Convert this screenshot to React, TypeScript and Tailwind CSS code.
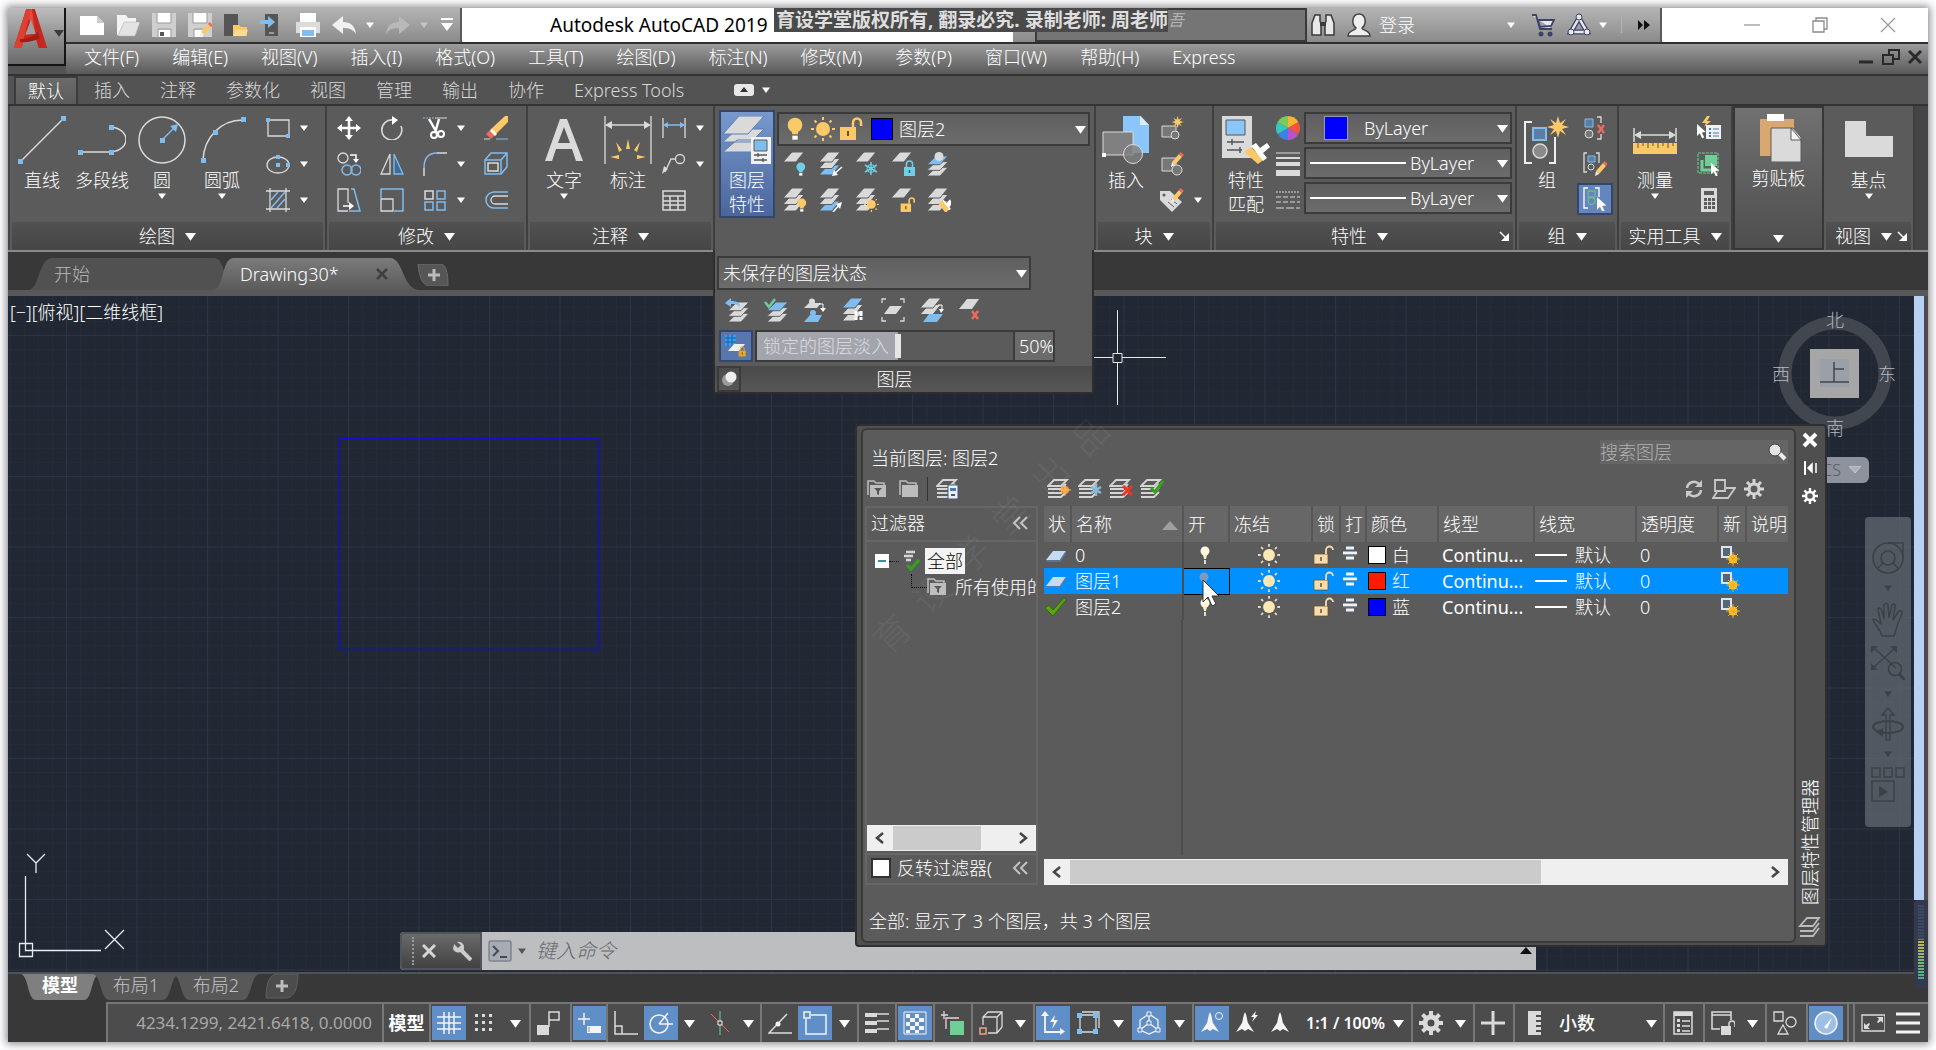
import React from "react";

const G = "#dadada";
const B = "#7fbcf0";
const Y = "#fcc969";
const R = "#ef6a5c";
const N = "#6fcf97";
const C = "#6fcfe6";
const BG = "#5b5b5b";

type Kids = { children?: React.ReactNode };

function Ic({ w = 24, h = 24, vb, children }: { w?: number; h?: number; vb?: string } & Kids) {
  return (
    <svg width={w} height={h} viewBox={vb ?? `0 0 ${w} ${h}`} fill="none" className="block shrink-0" aria-hidden="true">
      {children}
    </svg>
  );
}

function Caret({ size = 8, color = "#fff" }: { size?: number; color?: string }) {
  return (
    <Ic w={size} h={size} vb="0 0 8 8">
      <path d="M0 1.5h8L4 7z" fill={color} />
    </Ic>
  );
}

/* A stack of drawing sheets, listed from top to bottom */
function Stack({ colors = [G, G, G] }: { colors?: string[] }) {
  return (
    <g>
      {colors
        .map((c, i) => (
          <path key={i} d="M9 0h12l-8 10H0z" transform={`translate(0 ${i * 6.5})`} fill={c} stroke={BG} strokeWidth="1" />
        ))
        .reverse()}
    </g>
  );
}

const Bulb = ({ c = Y }: { c?: string }) => (
  <g>
    <circle cx="6" cy="6" r="5.5" fill={c} />
    <path d="M3 9h6l-1 4H4z" fill={c} />
    <path d="M4 14h4v3H4z" fill="#fff" />
  </g>
);
const Sun = ({ c = Y }: { c?: string }) => (
  <g>
    <circle cx="12" cy="12" r="7" fill={c} />
    <path d="M12 0v3M12 21v3M0 12h3M21 12h3M3.500 3.500l2 2M18.500 18.500l2 2M3.500 20.500l2-2M18.500 5.500l2-2" stroke={c} strokeWidth="2" />
  </g>
);
const Unlock = ({ c = Y }: { c?: string }) => (
  <g>
    <rect x="1" y="10" width="16" height="13" fill={c} />
    <path d="M14 10V5.500a4 4 0 0 1 8 0V9" stroke={c} strokeWidth="2.500" />
    <path d="M9 14v5" stroke="#6b5324" strokeWidth="2" />
  </g>
);
const Lock = ({ c = C }: { c?: string }) => (
  <g>
    <rect x="1" y="7" width="11" height="9" fill={c} />
    <path d="M3.500 7V4a3 3 0 0 1 6 0v3" stroke={c} strokeWidth="1.500" />
    <path d="M6.500 10v3" stroke="#2d5963" strokeWidth="1.500" />
  </g>
);
const Pencil = () => (
  <g>
    <path d="M2 10L9 2l3 3-7 8z" fill={Y} />
    <path d="M9 2l1.500-2L14 3l-2 2z" fill={R} />
    <path d="M2 10l3 3-4 2z" fill="#eee" />
  </g>
);
const Burst = () => (
  <path d="M12 0l2 7 6-4-4 6 7 2-7 2 4 6-6-4-2 7-2-7-6 4 4-6-7-2 7-2-4-6 6 4z" fill={Y} />
);
const Cross = ({ c = R }: { c?: string }) => <path d="M1 1l6 8M7 1L1 9" stroke={c} strokeWidth="2.500" />;
const Pointer = () => <path d="M0 0l11 10-5 .5 3 6-2.500 1.500-3-6.500L0 15z" fill="#fff" />;
const Brush = () => (
  <g>
    <path d="M5 3l4 5 4-4 1 2-3 4 2 3" stroke="#fff" strokeWidth="3" />
    <path d="M0 6l5-3 7 9-3 5z" fill={Y} />
  </g>
);

const I = {
  line: (
    <Ic w={48} h={48}>
      <path d="M3 45L45 3" stroke={G} strokeWidth="1.500" />
      <path d="M0 43h5v5H0zM43 0h5v5h-5z" fill={B} />
    </Ic>
  ),
  pline: (
    <Ic w={48} h={48}>
      <path d="M3 36h30c20-2 20-23 0-25" stroke={G} strokeWidth="1.500" />
      <path d="M0 34h5v5H0zM31 34h5v5h-5zM31 9h5v5h-5z" fill={B} />
    </Ic>
  ),
  circle: (
    <Ic w={48} h={48}>
      <circle cx="24" cy="24" r="23" stroke={G} strokeWidth="1.500" />
      <path d="M24 24l13-13" stroke={B} strokeWidth="1.500" />
      <path d="M40 8l-2 8-6-6zM22 22h5v5h-5z" fill={B} />
    </Ic>
  ),
  arc: (
    <Ic w={48} h={48}>
      <path d="M5 44C6 22 22 4 45 4" stroke={G} strokeWidth="1.500" />
      <path d="M3 42h5v5H3zM43 1h5v5h-5zM15 14h5v5h-5z" fill={B} />
    </Ic>
  ),
  rect: (
    <Ic>
      <path d="M2 4h21v16H2z" stroke={G} strokeWidth="1.300" />
      <path d="M0 2h4v4H0zM20 18h4v4h-4z" fill={B} />
    </Ic>
  ),
  ellipse: (
    <Ic>
      <ellipse cx="12" cy="13" rx="11" ry="8" stroke={G} strokeWidth="1.300" />
      <path d="M10 3h4v4h-4zM10 11h4v4h-4zM20 11h4v4h-4z" fill={B} />
    </Ic>
  ),
  hatch: (
    <Ic>
      <path d="M4 0v24M20 0v24M0 3h24M0 21h24" stroke={G} strokeWidth="1.300" />
      <path d="M5 12l7-8M5 20L19 4M11 20l8-9" stroke={B} strokeWidth="1.500" />
    </Ic>
  ),
  move: (
    <Ic>
      <path d="M12 3v18M3 12h18" stroke="#fff" strokeWidth="2.500" />
      <path d="M12 0l4 5H8zM12 24l4-5H8zM0 12l5-4v8zM24 12l-5-4v8z" fill="#fff" />
    </Ic>
  ),
  rotate: (
    <Ic>
      <path d="M13 4a10 10 0 1 0 8 6" stroke={G} strokeWidth="1.600" />
      <path d="M12 0l6 4-6 5z" fill="#fff" />
    </Ic>
  ),
  trim: (
    <Ic>
      <path d="M0 2h12" stroke={B} strokeDasharray="2 1" />
      <path d="M12 2h12" stroke={G} />
      <path d="M6 3l8 14M16 3l-4 14" stroke="#fff" strokeWidth="2.500" />
      <circle cx="11" cy="19" r="3" stroke="#fff" strokeWidth="2" />
      <circle cx="18" cy="18" r="3" stroke="#fff" strokeWidth="2" />
    </Ic>
  ),
  erase: (
    <Ic>
      <path d="M6 14L21 0h3v6L11 19z" fill={Y} />
      <path d="M6 14l5 5-4 4-5-5z" fill={R} />
      <path d="M8 13l5 5-2 2-5-5z" fill="#fff" />
      <path d="M0 23h6" stroke={G} />
      <path d="M12 23h12" stroke={B} />
    </Ic>
  ),
  copy: (
    <Ic>
      <circle cx="6" cy="6" r="5" stroke={G} strokeWidth="1.300" />
      <path d="M13 3h6v6" stroke="#fff" strokeWidth="1.500" />
      <path d="M16 7h6l-3 4z" fill="#fff" />
      <circle cx="10" cy="18" r="5" stroke={B} strokeWidth="1.500" />
      <circle cx="19" cy="18" r="5" stroke={B} strokeWidth="1.500" />
    </Ic>
  ),
  mirror: (
    <Ic>
      <path d="M10 2v20H1z" stroke={G} strokeWidth="1.300" />
      <path d="M14 2v20h9z" fill="#3f6c94" stroke={B} strokeWidth="1.300" />
    </Ic>
  ),
  fillet: (
    <Ic>
      <path d="M1 24v-8M14 1h10" stroke={G} strokeWidth="1.500" />
      <path d="M1 16C1 6 6 1 14 1" stroke={B} strokeWidth="1.500" />
    </Ic>
  ),
  explode: (
    <Ic>
      <path d="M1 8l6-7h16v14l-6 7M17 8l6-7" stroke={B} strokeWidth="1.500" />
      <path d="M1 8h16v14H1z" stroke={B} strokeWidth="1.500" />
      <path d="M4 11h10v8H4z" stroke={G} strokeWidth="1.500" />
    </Ic>
  ),
  stretch: (
    <Ic>
      <path d="M11 15V1H1v22h10" stroke={G} strokeWidth="1.300" />
      <path d="M14 1h3l6 22H12" stroke={B} strokeWidth="1.500" />
      <path d="M6 18h6" stroke="#fff" strokeWidth="1.500" />
      <path d="M12 14l5 4-5 4z" fill="#fff" />
    </Ic>
  ),
  scale: (
    <Ic>
      <path d="M1 10V1h22v22H14" stroke={B} strokeWidth="1.500" />
      <path d="M1 11h12v12H1z" stroke={G} strokeWidth="1.300" />
    </Ic>
  ),
  array: (
    <Ic>
      <path d="M2 3h8v8H2z" stroke={G} strokeWidth="1.500" />
      <path d="M14 3h8v8h-8zM2 14h8v8H2zM14 14h8v8h-8z" stroke={B} strokeWidth="1.500" />
    </Ic>
  ),
  offset: (
    <Ic>
      <path d="M24 4H10a8 8 0 0 0 0 16h14" stroke={B} strokeWidth="1.500" />
      <path d="M24 8H11a4 4 0 0 0 0 8h13" stroke={G} strokeWidth="1.300" />
    </Ic>
  ),
  text: (
    <Ic w={48} h={48}>
      <path d="M5 45L20 3h7l16 42h-7l-4-12H16l-4 12zM18 27h12L24 11z" fill={G} fillRule="evenodd" />
    </Ic>
  ),
  dim: (
    <Ic w={48} h={48}>
      <path d="M1 0v48M47 0v48M3 9h42" stroke={G} strokeWidth="1.300" />
      <path d="M1 9l7-4v8zM47 9l-7-4v8z" fill={G} />
      <path d="M24 23l-2 10h4zM12 26l3 10 3-2zM36 26l-3 10-3-2zM6 41l9-2v4zM42 41l-9-2v4z" fill={Y} />
    </Ic>
  ),
  dimSm: (
    <Ic>
      <path d="M1 2v20M23 2v20" stroke={G} strokeWidth="1.300" />
      <path d="M2 9h20" stroke={B} strokeWidth="1.500" />
      <path d="M1 9l5-3v6zM23 9l-5-3v6z" fill={B} />
    </Ic>
  ),
  leader: (
    <Ic>
      <circle cx="18" cy="7" r="4.500" stroke={G} strokeWidth="1.300" />
      <path d="M13 7H9L3 20" stroke={G} strokeWidth="1.300" />
      <path d="M0 22l2-8 4 3z" fill={G} />
    </Ic>
  ),
  table: (
    <Ic>
      <path d="M1 3h22v19H1zM1 8h22M1 13h22M1 17h22M8 8v14M16 8v14" stroke={G} strokeWidth="1.500" />
    </Ic>
  ),
  layerProps: (
    <Ic w={48} h={48}>
      <path d="M14 24h27L28 36H0zM14 13h27L28 26H0z" fill={G} stroke="#5d82b5" />
      <path d="M16 0h25L25 18H0z" fill={G} stroke="#5d82b5" />
      <path d="M28 21h20v27H28z" fill="#f2f2f2" />
      <path d="M31 24h13v11H31z" fill={B} stroke="#5a5a5a" />
      <path d="M31 39h13M31 44h13M35 37v4M40 42v4" stroke="#555" strokeWidth="1.300" />
    </Ic>
  ),
  insert: (
    <Ic w={48} h={48}>
      <path d="M21 0h18l8 9v28H21z" fill="#8bc6fb" />
      <path d="M38 0l9 9h-9z" fill="#d8ecfd" />
      <path d="M1 16h30v23H1z" fill="#808080" stroke={G} />
      <circle cx="31" cy="38" r="9.500" fill="#808080" fillOpacity=".8" stroke={G} />
      <path d="M0 37h4v4H0z" fill="#fff" />
    </Ic>
  ),
  matchProps: (
    <Ic w={48} h={48}>
      <path d="M0 0h30v42H0z" fill={G} />
      <path d="M4 4h19v15H4z" fill="#8bc6fb" stroke="#555" />
      <path d="M5 26h17M5 34h15M10 23v6M18 31v6" stroke="#555" strokeWidth="1.500" />
      <path d="M22 36l7-5 12 13-5 4z" fill={Y} />
      <path d="M29 30l5-3 4 5 7-5 3 4-7 6 4 5-4 3z" fill="#fff" />
    </Ic>
  ),
  wheel: (
    <Ic>
      <path d="M12 12V0a12 12 0 0 1 10.400 6z" fill="#f9b234" />
      <path d="M12 12l10.400-6a12 12 0 0 1 0 12z" fill="#f0563d" />
      <path d="M12 12l10.400 6A12 12 0 0 1 12 24z" fill="#b854c9" />
      <path d="M12 12v12a12 12 0 0 1-10.400-6z" fill="#3f7fe0" />
      <path d="M12 12L1.600 18a12 12 0 0 1 0-12z" fill="#37c6c0" />
      <path d="M12 12L1.600 6A12 12 0 0 1 12 0z" fill="#7cc95c" />
    </Ic>
  ),
  weights: (
    <Ic>
      <path d="M0 1h24" stroke={G} strokeWidth="1" />
      <path d="M0 6h24" stroke={G} strokeWidth="2" />
      <path d="M0 12h24" stroke={G} strokeWidth="4" />
      <path d="M0 21h24" stroke={G} strokeWidth="6" />
    </Ic>
  ),
  types: (
    <Ic>
      <path d="M0 4h24" stroke={G} strokeDasharray="2 1" />
      <path d="M0 9h24M0 14h24" stroke={G} strokeDasharray="5 2" />
      <path d="M0 20h24" stroke={G} strokeDasharray="8 2" />
    </Ic>
  ),
  blockNew: (
    <Ic>
      <path d="M2 10h14v11H2z" stroke={G} fill="#777" />
      <circle cx="15" cy="19" r="4" stroke={G} fill="#777" />
      <g transform="translate(11 0) scale(.55)"><Burst /></g>
    </Ic>
  ),
  blockEdit: (
    <Ic>
      <path d="M2 6h14v13H2z" stroke={G} fill="#777" />
      <circle cx="17" cy="18" r="5" stroke={G} fill="#777" />
      <g transform="translate(10 0)"><Pencil /></g>
    </Ic>
  ),
  blockTag: (
    <Ic>
      <path d="M0 3h10l12 11-10 10L0 12z" fill={G} />
      <circle cx="4" cy="7" r="1.500" fill={BG} />
      <path d="M8 14l6 5M11 11l6 5" stroke="#666" />
      <g transform="translate(10 0)"><Pencil /></g>
    </Ic>
  ),
  group: (
    <Ic w={48} h={48}>
      <path d="M9 6H2v41h7M26 47h6V21" stroke="#eee" strokeWidth="2" />
      <path d="M10 12h13v12H10z" fill="#5a7fa3" stroke={B} strokeWidth="2" />
      <circle cx="17" cy="35" r="7" fill="#8a8a8a" stroke={G} strokeWidth="1.500" />
      <g transform="translate(23 0)"><Burst /></g>
    </Ic>
  ),
  ungroup: (
    <Ic>
      <path d="M2 3h8v8H2z" fill="#5a7fa3" stroke={B} />
      <circle cx="6" cy="18" r="4" fill="#777" stroke={G} />
      <path d="M14 1h4v6M18 18v5h-4" stroke={G} strokeWidth="1.300" />
      <g transform="translate(14 8)"><Cross /></g>
    </Ic>
  ),
  groupEdit: (
    <Ic>
      <path d="M4 1H1v19h3M13 1h3v10" stroke={G} strokeWidth="1.300" />
      <path d="M5 4h7v6H5z" fill="#5a7fa3" stroke={B} />
      <circle cx="8" cy="15" r="3" stroke={G} />
      <g transform="translate(11 9)"><Pencil /></g>
    </Ic>
  ),
  groupSel: (
    <Ic>
      <path d="M5 1H1v20h4M12 1h4v9" stroke="#fff" strokeWidth="1.300" />
      <path d="M5 4h7v6H5zM5 14a3.500 3.500 0 1 0 7 0a3.500 3.500 0 1 0-7 0" stroke="#6dbb8f" strokeWidth="1.300" />
      <g transform="translate(14 10) scale(.85)"><Pointer /></g>
    </Ic>
  ),
  measure: (
    <Ic w={48} h={48}>
      <path d="M3 12v14M45 12v14M5 19h38" stroke={G} strokeWidth="1.500" />
      <path d="M3 19l7-4v8zM45 19l-7-4v8z" fill={G} />
      <path d="M2 27h44v11H2z" fill={Y} />
      <path d="M7 27v5M12 27v3M17 27v5M22 27v3M27 27v5M32 27v3M37 27v5M42 27v3" stroke="#6b5324" />
    </Ic>
  ),
  qselect: (
    <Ic>
      <path d="M9 9h15v14H9z" fill="#f2f2f2" />
      <path d="M12 12h2v2h-2zM12 16h2v2h-2zM12 19h2v2h-2z" fill="#3a7bc8" />
      <path d="M16 13h6M16 17h6M16 20h6" stroke="#3a7bc8" />
      <path d="M10 0l-5 7h4l-2 4 7-6h-4l3-5z" fill={Y} />
      <g transform="translate(0 8) scale(.8)"><Pointer /></g>
    </Ic>
  ),
  selAll: (
    <Ic>
      <path d="M1 1h20v20H1z" stroke={N} strokeDasharray="3 1" />
      <path d="M8 3h12v11H8z" fill={N} />
      <path d="M5 8v10h11" stroke={N} strokeWidth="3" />
      <g transform="translate(14 11) scale(.75)"><Pointer /></g>
    </Ic>
  ),
  calc: (
    <Ic>
      <path d="M4 0h16v24H4z" fill={G} />
      <path d="M7 3h10v4H7z" fill={BG} />
      <path d="M7 10h3v3H7zM11 10h3v3h-3zM15 10h3v3h-3zM7 14h3v3H7zM11 14h3v3h-3zM15 14h3v3h-3zM7 18h3v3H7zM11 18h3v3h-3zM15 18h3v3h-3z" fill={BG} />
    </Ic>
  ),
  paste: (
    <Ic w={48} h={48}>
      <path d="M5 5h34v37H5z" fill="#d9a870" />
      <path d="M12 0h17v7H12z" fill="#fff" />
      <path d="M16 14h22l8 9v25H16z" fill={G} stroke="#5b5b5b" />
      <path d="M36 14l10 12H36z" fill="#f5f5f5" stroke="#5b5b5b" />
    </Ic>
  ),
  base: (
    <Ic w={48} h={48}>
      <path d="M0 5h21v15h27v21H0z" fill={G} />
    </Ic>
  ),
};

const layerIcons: React.ReactNode[][] = [
  [
    <Ic key="a"><Stack colors={[G]} /><g transform="translate(13 10) scale(.8)"><Bulb c={C} /></g></Ic>,
    <Ic key="b"><Stack colors={[G, G, B]} /><path d="M23 15l-8 7" stroke="#fff" strokeWidth="1.500" /><path d="M13 24l2-6 4 5z" fill="#fff" /></Ic>,
    <Ic key="c"><Stack colors={[G]} /><path d="M16 10v13M10 13l12 7M22 13l-12 7" stroke={C} strokeWidth="1.500" /><circle cx="16" cy="16.500" r="4" stroke={C} /></Ic>,
    <Ic key="d"><Stack colors={[G]} /><g transform="translate(12 8)"><Lock /></g></Ic>,
    <Ic key="e"><g transform="translate(0 4) scale(1 .87)"><Stack colors={[B, G, G]} /></g><circle cx="12" cy="4.500" r="4.500" fill={G} /></Ic>,
  ],
  [
    <Ic key="a"><Stack /><g transform="translate(14 10) scale(.8)"><Bulb /></g></Ic>,
    <Ic key="b"><Stack colors={[G, G, B]} /><path d="M14 24l7-8" stroke="#fff" strokeWidth="1.500" /><path d="M23 14l-2 7-4-5z" fill="#fff" /></Ic>,
    <Ic key="c"><Stack /><g transform="translate(9 9) scale(.62)"><Sun /></g></Ic>,
    <Ic key="d"><Stack colors={[G]} /><g transform="translate(9 9) scale(.65)"><Unlock /></g></Ic>,
    <Ic key="e"><Stack /><g transform="translate(11 10) scale(.9)"><Brush /></g></Ic>,
  ],
];

const stateIcons: React.ReactNode[] = [
  <Ic key="a"><g transform="translate(3 4) scale(1 .87)"><Stack /></g><path d="M0 5l6-5v3c6 0 9 2 9 6-3-3-5-3-9-3v3z" fill={B} /></Ic>,
  <Ic key="b"><g transform="translate(3 4) scale(1 .87)"><Stack colors={[B, G, G]} /></g><path d="M1 4l4 5 6-8" stroke={N} strokeWidth="2.500" /></Ic>,
  <Ic key="c"><path d="M6 5h12l-4 5H1z" fill={G} /><circle cx="9" cy="3.500" r="3" fill={G} /><path d="M7 17h12l-4 7H1z" fill={B} /><circle cx="10" cy="15" r="3" fill={B} /><path d="M16 6h4v5" stroke="#fff" /><path d="M17 10h6l-3 4z" fill="#fff" /></Ic>,
  <Ic key="d"><Stack colors={[B, G, G]} /><path d="M14 13v9M19 13v9" stroke="#fff" strokeWidth="3" strokeDasharray="5 1 3" /></Ic>,
  <Ic key="e"><path d="M1 5V1h4M19 1h4v4M23 19v4h-4M5 23H1v-4" stroke={G} strokeWidth="1.300" /><path d="M9 8h12l-6 8H3z" fill={G} /></Ic>,
  <Ic key="f"><Stack colors={[G, G]} /><path d="M9 16h14l-6 8H3z" fill={B} /><path d="M18 7h4v5" stroke="#fff" /><path d="M19 11h5l-3 4z" fill="#fff" /></Ic>,
  <Ic key="g"><path d="M8 1h12l-7 10H0z" fill={G} /><g transform="translate(12 12)"><Cross /></g></Ic>,
];

function Big({ icon, label, caret, w = "w-15" }: { icon: React.ReactNode; label: string[]; caret?: boolean; w?: string }) {
  return (
    <button className={`flex ${w} shrink-0 flex-col items-center pt-2.5`}>
      {icon}
      <span className="mt-1 flex flex-col text-lg leading-6">
        {label.map((l) => (
          <span key={l}>{l}</span>
        ))}
      </span>
      {caret && <Caret />}
    </button>
  );
}

function Col({ items, carets = [] }: { items: [string, React.ReactNode][]; carets?: number[] }) {
  return (
    <div className="flex shrink-0 flex-col pt-1">
      {items.map(([name, icon], i) => (
        <div key={name} className="flex h-9 items-center gap-2.5">
          <button aria-label={name}>{icon}</button>
          {carets.includes(i) && <Caret />}
        </div>
      ))}
    </div>
  );
}

function Launcher() {
  return (
    <Ic w={10} h={10}>
      <path d="M1 1l6 6" stroke="#fff" strokeWidth="1.500" />
      <path d="M10 2v8H2z" fill="#fff" />
    </Ic>
  );
}

function Panel({ title, w, launcher, children }: { title: string; w: string; launcher?: boolean } & Kids) {
  return (
    <section className={`flex ${w} shrink-0 flex-col border-r-2 border-[#3f3f3f] bg-[#5b5b5b]`}>
      <div className="flex flex-1">{children}</div>
      <button className="mx-0.5 flex h-7 items-center bg-linear-to-b from-[#515151] to-[#464646] px-1 text-lg">
        <span className="flex flex-1 items-center justify-center gap-2.5 whitespace-nowrap">
          {title}
          <Caret size={11} />
        </span>
        {launcher && <Launcher />}
      </button>
    </section>
  );
}

function Drop({ label, value, className, before }: { label: string; value: string; className: string; before?: React.ReactNode }) {
  return (
    <div className={`relative flex items-center border-2 border-[#3b3b3b] bg-linear-to-b from-[#5f5f5f] to-[#6c6c6c] ${className}`}>
      {before}
      <select aria-label={label} className="h-full min-w-0 flex-1 appearance-none bg-transparent text-lg leading-6 outline-none">
        <option>{value}</option>
      </select>
      <span className="pointer-events-none absolute inset-y-0 right-0.5 flex items-center">
        <Caret size={11} />
      </span>
    </div>
  );
}

function TitleBar() {
  const qat: [string, React.ReactNode][] = [
    ["新建", <Ic><path d="M0 3h17l7 7v12H0z" fill="#fff" /><path d="M17 3l7 7h-7z" fill="#ccc" /></Ic>],
    ["打开", <Ic><path d="M1 2h9l2 3h8v5H8L3 22H1z" fill="#f3f3f3" /><path d="M8 9h16l-5 14H2z" fill="#e3e3e3" stroke="#aaa" strokeWidth=".5" /></Ic>],
    ["保存", <Ic><path d="M0 0h24v24H0z" fill="#cfcfcf" /><path d="M5 0h14v10H5zM6 17h13v7H6z" fill="#fff" /><path d="M6 24v-8h13v8M5 0v10h14V0" stroke="#999" /><path d="M8 19h4v4H8z" fill="#555" /></Ic>],
    ["另存为", <Ic><path d="M0 0h24v24H0z" fill="#cfcfcf" /><path d="M5 0h14v10H5zM6 17h9v7H6z" fill="#fff" /><path d="M6 24v-8h9M5 0v10h14V0" stroke="#999" /><g transform="translate(11 9)"><Pencil /></g></Ic>],
    ["从移动设备打开", <Ic><path d="M0 1h14v22H0z" fill="#555" /><path d="M9 12h6l2 2h6v9H9z" fill={Y} /><path d="M12 17h12l-3 6H9z" fill="#ffdc94" /></Ic>],
    ["保存到移动设备", <Ic><path d="M5 1h13v22H5z" fill="#555" /><path d="M9 20h5" stroke="#ddd" /><path d="M0 7h8V3l7 6-7 6v-4H0z" fill={B} /></Ic>],
    ["打印", <Ic><path d="M4 0h16v9H4z" fill="#fff" /><path d="M0 9h24v11H0z" fill="#dcdcdc" /><path d="M4 14h16v10H4z" fill="#fff" /><path d="M6 17h12v6H6z" fill={B} /></Ic>],
  ];
  return (
    <div className="flex h-8.5 bg-linear-to-b from-[#b4b4b4] to-[#8b8b8b]">
      <div className="flex shrink-0 items-center gap-3 pr-1.5 pl-3.5">
        {qat.map(([name, icon]) => (
          <button key={name} aria-label={name}>{icon}</button>
        ))}
        <button aria-label="放弃" className="flex items-center gap-2.5">
          <Ic><path d="M0 12l11-9v6c8 0 12 4 13 12-3-5-7-6-13-6v6z" fill="#f0f0f0" /></Ic>
          <Caret />
        </button>
        <button aria-label="重做" className="flex items-center gap-2.5">
          <Ic><path d="M24 12L13 3v6C5 9 1 13 0 21c3-5 7-6 13-6v6z" fill="#b9b9b9" /></Ic>
          <Caret color="#c4c4c4" />
        </button>
        <button aria-label="自定义快速访问工具栏">
          <Ic w={14} h={14}><path d="M1 1h12" stroke="#fff" strokeWidth="2" /><path d="M1 5h12l-6 8z" fill="#fff" /></Ic>
        </button>
      </div>
      <div className="relative flex min-w-0 flex-1 items-center border-l-2 border-[#5a5a5a] bg-white pl-22 text-[19px] font-normal text-black">
        <span className="whitespace-nowrap">Autodesk AutoCAD 2019</span>
        <div className="absolute top-0 left-78 z-10 flex h-6 items-center bg-[#4a4a4a] pl-0.5 text-[19px] leading-6 font-bold whitespace-nowrap text-[#dedede]">
          育设学堂版权所有, 翻录必究. 录制老师: 周老师
          <span className="absolute left-full text-base font-normal text-[#b5b5b5] italic">吾</span>
        </div>
      </div>
      <div className="w-5.5 shrink-0" />
      <div className="h-full w-68 shrink-0 border-2 border-[#3a3a3a] bg-[#757575]" />
      <div className="flex shrink-0 items-center pr-2.5 pl-1 text-lg">
        <button aria-label="搜索">
          <Ic><path d="M4 2h5v6l1 3v11H1V10zM20 2h-5v6l-1 3v11h9V10z" fill="#e8e8e8" stroke="#3a3a3a" strokeWidth="1.500" /><path d="M9 9h6v4H9z" fill="#3a3a3a" /></Ic>
        </button>
        <button className="ml-3 flex items-center gap-2">
          <Ic><path d="M1 23c0-6 7-5 8-8-5-4-4-14 3-14s8 10 3 14c1 3 8 2 8 8z" fill="#eee" stroke="#444" strokeWidth="1.500" /></Ic>
          登录
        </button>
        <span className="ml-23"><Caret /></span>
        <button aria-label="应用商店" className="ml-4">
          <Ic><path d="M1 2h4l4 14h12M7 7h16l-3 6-11 1z" fill="#e8e8ee" stroke="#3d4467" strokeWidth="1.800" /><circle cx="10" cy="21" r="2.500" fill="#3d4467" /><circle cx="19" cy="21" r="2.500" fill="#3d4467" /></Ic>
        </button>
        <button aria-label="Autodesk 360" className="ml-3 flex items-center gap-2">
          <Ic><path d="M12 5L4 19h16z" stroke="#3d4467" strokeWidth="5" /><path d="M12 5L4 19h16z" stroke="#e8e8ee" strokeWidth="2.500" /><g fill="#e8e8ee" stroke="#3d4467"><circle cx="12" cy="4" r="3" /><circle cx="4" cy="19" r="3" /><circle cx="20" cy="19" r="3" /></g></Ic>
          <Caret />
        </button>
        <span className="ml-3.5 h-4 w-px bg-[#b4b4b4]" />
        <span className="ml-4"><Ic w={12} h={12}><path d="M0 1l5 5-5 5zM6 1l6 5-6 5z" fill="#111" /></Ic></span>
      </div>
      <div className="flex w-67 shrink-0 items-center gap-13 border-l-2 border-[#5a5a5a] bg-white pl-20.5">
        <button aria-label="最小化"><Ic w={16} h={18}><path d="M0 9h16" stroke="#9a9a9a" strokeWidth="1.300" /></Ic></button>
        <button aria-label="还原"><Ic w={16} h={18}><path d="M1 5h11v11H1zM4 5V2h11v11h-3" stroke="#8a8a8a" strokeWidth="1.300" /></Ic></button>
        <button aria-label="关闭"><Ic w={16} h={18}><path d="M1 2l14 14M15 2L1 16" stroke="#9a9a9a" strokeWidth="1.300" /></Ic></button>
      </div>
    </div>
  );
}

const menus = ["文件(F)", "编辑(E)", "视图(V)", "插入(I)", "格式(O)", "工具(T)", "绘图(D)", "标注(N)", "修改(M)", "参数(P)", "窗口(W)", "帮助(H)", "Express"];
const ribbonTabs = ["插入", "注释", "参数化", "视图", "管理", "输出", "协作", "Express Tools"];

function Header() {
  return (
    <header className="flex">
      <div className="relative min-w-0 flex-1 pl-14.5">
        <TitleBar />
        <nav className="flex h-8 items-center gap-[33px] border-t-2 border-[#2f2f2f] bg-linear-to-b from-[#9c9c9c] to-[#5a5a5a] pb-1 pl-4.5 text-lg">
          {menus.map((m) => (
            <button key={m} className="whitespace-nowrap">{m}</button>
          ))}
          <span className="ml-auto flex items-center gap-2 pr-1.5">
            <Ic w={16} h={18}><path d="M1 14h14" stroke="#2a2a2a" strokeWidth="3" /></Ic>
            <Ic w={18} h={18}><path d="M1 7h10v9H1zM7 7V2h10v9h-6" stroke="#2a2a2a" strokeWidth="2" /></Ic>
            <Ic w={14} h={18}><path d="M1 3l12 12M13 3L1 15" stroke="#2a2a2a" strokeWidth="3" /></Ic>
          </span>
        </nav>
        <button aria-label="应用程序菜单" className="absolute top-0 left-0 flex h-14.5 w-14.5 items-start gap-1 border-r-2 border-b-2 border-[#151515] bg-linear-to-b from-[#bdbdbd] to-[#6a6a6a] pl-1">
          <Ic w={38} h={42} vb="0 0 36 44">
            <path d="M0 42L13 1h9l13 41h-9l-3-10-13 3-2 7z" fill="#c5281f" />
            <path d="M13 1h6l4 31-5-14z" fill="#e34b3c" />
            <path d="M12 28l6-16 5 15z" fill="#9f9f9f" />
            <path d="M0 42L13 1l5 0L8 42z" fill="#dd3f33" />
            <path d="M6 33c10-1 15-3 19-8l2 7c-6 3-14 4-20 4z" fill="#a31c16" />
          </Ic>
          <span className="pt-5"><Caret size={10} color="#3a3a3a" /></span>
        </button>
      </div>
    </header>
  );
}

function Tabs() {
  return (
    <nav className="flex h-8 items-end gap-7.5 border-t-2 border-b-2 border-[#333] bg-[#535353] pl-1.5 text-lg text-[#d8d8d8]">
      <button className="-mr-3.5 h-7 border-2 border-b-0 border-[#3c3c3c] bg-linear-to-b from-[#6b6b6b] to-[#5b5b5b] px-3 leading-6.5 text-white">默认</button>
      {ribbonTabs.map((t) => (
        <button key={t} className="h-7 leading-7 whitespace-nowrap">{t}</button>
      ))}
      <button aria-label="最小化功能区" className="ml-5 flex h-7 items-center gap-2">
        <Ic w={20} h={12}><rect width="20" height="12" rx="3" fill="#e8e8e8" /><path d="M6 8l4-5 4 5z" fill="#333" /></Ic>
        <Caret />
      </button>
    </nav>
  );
}

function LayersPanel() {
  return (
    <section className="relative flex w-[381px] shrink-0 border-r-2 border-[#3f3f3f] bg-[#5b5b5b]">
      <button className="mt-1 ml-1 flex h-27 w-14 flex-col items-center border-2 border-[#33466b] bg-linear-to-b from-[#7799cd] to-[#4b669b] pt-1">
        {I.layerProps}
        <span className="mt-1 text-lg leading-6">图层</span>
        <span className="text-lg leading-6">特性</span>
      </button>
      <div className="ml-0.5 flex flex-1 flex-col pt-1.5 pr-1">
        <Drop
          label="图层"
          value="图层2"
          className="h-8.5"
          before={
            <span className="flex items-center pr-1.5 pl-2">
              <Ic w={16} h={24} vb="0 0 12 18"><Bulb /></Ic>
              <span className="ml-2"><Ic><Sun /></Ic></span>
              <span className="ml-1"><Ic><Unlock /></Ic></span>
              <span className="ml-2 h-5.5 w-5.5 border border-black bg-[#0000ff]" />
            </span>
          }
        />
        <div className="flex flex-col pl-1.5">
          {layerIcons.map((row, i) => (
            <div key={i} className="flex h-9 items-center gap-3">
              {row.map((ic, j) => (
                <button key={j} aria-label="图层工具">{ic}</button>
              ))}
            </div>
          ))}
        </div>
      </div>
      <div className="absolute top-full -left-0.5 z-20 flex h-36 w-[381px] flex-col border-2 border-t-0 border-[#2e2e2e] bg-[#5b5b5b]">
        <Drop label="图层状态" value="未保存的图层状态" className="mt-1.5 ml-0.5 h-8.5 w-[314px] pl-1" />
        <div className="flex h-10 items-center gap-[15px] pl-2.5">
          {stateIcons.map((ic, i) => (
            <button key={i} aria-label="图层状态工具">{ic}</button>
          ))}
        </div>
        <div className="flex h-8 pl-1">
          <button aria-label="锁定的图层淡入" className="flex w-8.5 items-center justify-center border-2 border-[#33466b] bg-[#5878ad]">
            <Ic><path d="M1 1h11v11H1z" fill="#3a9cf0" /><path d="M4 1v11M8 1v11M1 4h11M1 8h11" stroke="#1d5c9b" /><path d="M10 10h11l-6 7H4z" fill="#eee" /><g transform="translate(14 12) scale(.65)"><Lock c="#f2a21f" /></g></Ic>
          </button>
          <label className="relative ml-0.5 flex w-[260px] border-2 border-[#3b3b3b]">
            <input
              type="range"
              defaultValue={55}
              className="h-full w-full appearance-none bg-[linear-gradient(to_right,#a2a5ab_55%,#5b5b5b_55%)] [&::-webkit-slider-thumb]:h-6 [&::-webkit-slider-thumb]:w-1.5 [&::-webkit-slider-thumb]:appearance-none [&::-webkit-slider-thumb]:bg-[#e6e6e6]"
            />
            <span className="pointer-events-none absolute inset-y-0 left-1.5 flex items-center text-lg text-[#dcdde0]">锁定的图层淡入</span>
          </label>
          <input aria-label="淡入百分比" defaultValue="50%" className="w-10 border-2 border-l-0 border-[#3b3b3b] bg-[#6b6b6b] pl-1 text-lg outline-none" />
        </div>
        <div className="mt-auto flex h-6.5 items-center bg-linear-to-b from-[#4a4a4a] to-[#575757] text-lg">
          <button aria-label="固定" className="ml-0.5 flex h-6.5 w-6 items-center justify-center border-2 border-[#3b3b3b]">
            <Ic w={16} h={16}><circle cx="7" cy="9" r="6" fill="#999" /><circle cx="10" cy="6" r="5.500" fill="#eee" /></Ic>
          </button>
          <span className="flex-1 pr-11 text-center">图层</span>
        </div>
      </div>
    </section>
  );
}

function Ribbon() {
  const by = <span className="mr-1 ml-1 h-0.5 w-24 shrink-0 bg-white" />;
  return (
    <div className="flex h-36.5 border-b-2 border-[#8a8a8a] bg-[#454545] pl-0.5 text-white">
      <Panel title="绘图" w="w-[317px]">
        <div className="flex pl-0.5">
          <Big icon={I.line} label={["直线"]} />
          <Big icon={I.pline} label={["多段线"]} />
          <Big icon={I.circle} label={["圆"]} caret />
          <Big icon={I.arc} label={["圆弧"]} caret />
        </div>
        <div className="pl-3.5">
          <Col items={[["矩形", I.rect], ["椭圆", I.ellipse], ["图案填充", I.hatch]]} carets={[0, 1, 2]} />
        </div>
      </Panel>
      <Panel title="修改" w="w-[201px]">
        <div className="flex gap-[19px] pl-2.5">
          <Col items={[["移动", I.move], ["复制", I.copy], ["拉伸", I.stretch]]} />
          <Col items={[["旋转", I.rotate], ["镜像", I.mirror], ["缩放", I.scale]]} />
          <Col items={[["修剪", I.trim], ["圆角", I.fillet], ["阵列", I.array]]} carets={[0, 1, 2]} />
          <Col items={[["删除", I.erase], ["分解", I.explode], ["偏移", I.offset]]} />
        </div>
      </Panel>
      <Panel title="注释" w="w-[187px]">
        <div className="flex gap-1 pl-1.5">
          <Big icon={I.text} label={["文字"]} caret />
          <Big icon={I.dim} label={["标注"]} />
          <Col items={[["线性", I.dimSm], ["引线", I.leader], ["表格", I.table]]} carets={[0, 1]} />
        </div>
      </Panel>
      <LayersPanel />
      <Panel title="块" w="w-[118px]">
        <div className="flex gap-1">
          <Big icon={I.insert} label={["插入"]} />
          <Col items={[["创建", I.blockNew], ["编辑", I.blockEdit], ["编辑属性", I.blockTag]]} carets={[2]} />
        </div>
      </Panel>
      <Panel title="特性" w="w-[303px]" launcher>
        <div className="flex pl-0.5">
          <Big icon={I.matchProps} label={["特性", "匹配"]} />
          <Col items={[["颜色", I.wheel], ["线宽", I.weights], ["线型", I.types]]} />
          <div className="ml-1 flex w-52 flex-col gap-[3px] pt-1.5">
            <Drop label="对象颜色" value="ByLayer" className="h-8" before={<span className="mr-4 ml-4.5 h-6 w-6 shrink-0 border border-[#99a] bg-[#0000ff]" />} />
            <Drop label="线宽" value="ByLayer" className="h-8" before={by} />
            <Drop label="线型" value="ByLayer" className="h-8" before={by} />
          </div>
        </div>
      </Panel>
      <Panel title="组" w="w-[102px]">
        <Big icon={I.group} label={["组"]} />
        <div className="flex w-9 shrink-0 flex-col items-center pt-1">
          <button aria-label="解除编组" className="flex h-9 items-center">{I.ungroup}</button>
          <button aria-label="组编辑" className="flex h-9 items-center">{I.groupEdit}</button>
          <button aria-label="启用组选择" className="mt-px flex h-8 w-9 items-center justify-center border-2 border-[#33466b] bg-[#6485bd]">{I.groupSel}</button>
        </div>
      </Panel>
      <Panel title="实用工具" w="w-[114px]">
        <div className="flex gap-2.5 pl-1">
          <Big icon={I.measure} label={["测量"]} caret w="w-16" />
          <Col items={[["快速选择", I.qselect], ["全部选择", I.selAll], ["计算器", I.calc]]} />
        </div>
      </Panel>
      <section className="flex w-[91px] shrink-0 flex-col items-center border-2 border-[#373737] bg-linear-to-b from-[#717171] to-[#4e4e4e] pt-1.5">
        <button className="flex flex-col items-center">
          {I.paste}
          <span className="mt-1 text-lg leading-6">剪贴板</span>
        </button>
        <button aria-label="展开剪贴板" className="mt-auto pb-1"><Caret size={11} /></button>
      </section>
      <Panel title="视图" w="w-[91px]" launcher>
        <Big icon={I.base} label={["基点"]} caret w="w-full" />
      </Panel>
    </div>
  );
}

function FileTabs() {
  return (
    <div className="flex h-11 items-end border-b-6 border-[#585858] bg-[#383838] pl-5 text-lg text-[#b8b8b8]">
      <div className="relative flex h-8 w-50 items-center pl-6.5">
        <svg className="absolute inset-0 h-full w-full" viewBox="0 0 200 32" preserveAspectRatio="none" aria-hidden="true">
          <path d="M0 32C12 32 10 0 24 0H186C198 0 198 32 200 32z" fill="#515151" />
        </svg>
        <a href="#start" className="relative">开始</a>
      </div>
      <div className="relative -ml-4 flex h-8 w-52 items-center justify-between pr-8 pl-7 text-white">
        <svg className="absolute inset-0 h-full w-full" viewBox="0 0 208 32" preserveAspectRatio="none" aria-hidden="true">
          <defs>
            <linearGradient id="tab" x1="0" y1="0" x2="0" y2="1">
              <stop offset="0" stopColor="#7b7b7b" />
              <stop offset="1" stopColor="#5b5b5b" />
            </linearGradient>
          </defs>
          <path d="M0 32C14 32 8 0 22 0H178C192 0 190 32 208 32z" fill="url(#tab)" />
        </svg>
        <a href="#drawing" className="relative">Drawing30*</a>
        <button aria-label="关闭图形" className="relative"><Ic w={12} h={12}><path d="M1 1l10 10M11 1L1 11" stroke="#3f3f3f" strokeWidth="2.500" /></Ic></button>
      </div>
      <button aria-label="新图形" className="mb-1 -ml-1">
        <Ic w={34} h={22}><path d="M2 0h22c6 0 8 8 8 22H14C6 22 3 12 2 0z" fill="#565656" stroke="#6a6a6a" /><path d="M18 5v12M12 11h12" stroke="#bcbcbc" strokeWidth="3" /></Ic>
      </button>
    </div>
  );
}

const SmStack = ({ children }: Kids) => (
  <Ic w={24} h={20}>
    <path d="M7 1h13l-6 6H1zM1 10h13l5-5M1 14h13l5-5M1 18h13l5-5" stroke="#d5d5d5" strokeWidth="1.800" />
    {children}
  </Ic>
);
const Folder = ({ funnel }: { funnel?: boolean }) => (
  <Ic w={20} h={18}>
    <path d="M1 15V1h6l2 2h8v2" stroke="#bdbdbd" strokeWidth="1.500" />
    <path d="M3 5h16v12H3z" fill="#bdbdbd" />
    {funnel && <path d="M7 8h8l-3 3v4l-2-1v-3z" fill="#555" />}
  </Ic>
);
const Gear = ({ s = 20, c = "#d5d5d5" }: { s?: number; c?: string }) => (
  <Ic w={s} h={s} vb="0 0 20 20">
    <path d="M10 0v20M0 10h20M3 3l14 14M17 3L3 17" stroke={c} strokeWidth="3" />
    <circle cx="10" cy="10" r="5" fill={BG} stroke={c} strokeWidth="3" />
  </Ic>
);
const Chevrons = () => (
  <Ic w={16} h={14}><path d="M8 1L2 7l6 6M15 1L9 7l6 6" stroke="#c2c2c2" strokeWidth="2" /></Ic>
);
const Arrow = ({ right }: { right?: boolean }) => (
  <Ic w={10} h={12}><path d={right ? "M2 1l6 5-6 5" : "M8 1L2 6l6 5"} stroke="#444" strokeWidth="2.500" /></Ic>
);

function ScrollBar({ className, thumb }: { className: string; thumb: string }) {
  return (
    <div className={`flex shrink-0 items-stretch bg-[#efefef] ${className}`}>
      <button aria-label="向左滚动" className="flex w-6.5 items-center justify-center"><Arrow /></button>
      <div className="flex flex-1 py-px"><div className={`bg-[#cbcbcb] ${thumb}`} /></div>
      <button aria-label="向右滚动" className="flex w-6.5 items-center justify-center"><Arrow right /></button>
    </div>
  );
}

type Row = { name: string; color: string; swatch: string; state: "sheet" | "current"; off?: boolean; selected?: boolean };
const rows: Row[] = [
  { name: "0", color: "白", swatch: "bg-white", state: "sheet" },
  { name: "图层1", color: "红", swatch: "bg-[#ff1a00]", state: "sheet", off: true, selected: true },
  { name: "图层2", color: "蓝", swatch: "bg-[#0000ff]", state: "current" },
];
const cols: [string, string][] = [
  ["状", "w-[27px]"], ["名称", "w-[112px]"], ["开", "w-[46px]"], ["冻结", "w-[83px]"], ["锁", "w-[28px]"], ["打", "w-[26px]"],
  ["颜色", "w-[72px]"], ["线型", "w-[96px]"], ["线宽", "w-[102px]"], ["透明度", "w-[82px]"], ["新", "w-[28px]"], ["说明", "w-[42px]"],
];

function LayerTable() {
  return (
    <div className="flex flex-1 flex-col">
      <table className="w-full table-fixed border-collapse text-lg leading-6">
        <thead>
          <tr className="h-9 bg-[#676767]">
            {cols.map(([c, w]) => (
              <th key={c} className={`${w} relative overflow-hidden border-r-2 border-[#565656] p-0 pl-1 text-left font-light whitespace-nowrap last:border-r-0`}>
                {c}
                {c === "名称" && (
                  <span className="absolute top-3.5 right-1"><Ic w={16} h={10}><path d="M0 10l8-9 8 9z" fill="#a0a0a0" /></Ic></span>
                )}
              </th>
            ))}
          </tr>
        </thead>
        <tbody>
          {rows.map((r) => (
            <tr key={r.name} className={`h-[26px] ${r.selected ? "bg-[#0090ff]" : ""}`}>
              <td className="p-0">
                {r.state === "sheet" ? (
                  <Ic w={24} h={20}><path d="M9 6h13l-6 9H2z" fill="#c6dbf2" /><path d="M2 16h14l6-9" stroke="#5d7ba0" strokeWidth="1.500" /></Ic>
                ) : (
                  <Ic w={24} h={22}><path d="M1 12l4-3 4 5L20 2l2 2L9 20z" fill="#58a316" stroke="#2f6a08" /></Ic>
                )}
              </td>
              <td className="border-r-2 border-[#4d4d4d] p-0 pl-1">{r.name}</td>
              <td className={`p-0 ${r.off ? "border border-black" : ""}`}>
                <span className="flex justify-center pr-1">
                  <Ic w={12} h={20} vb="0 0 12 20"><circle cx="6" cy="6" r="4.500" fill={r.off ? "#7b9cc0" : "#fff8dc"} /><path d="M4 10h4l-1 4H5z" fill={r.off ? "#7b9cc0" : "#f8efc4"} /><path d="M5 15h2v4H5z" fill="#ddd" /></Ic>
                </span>
              </td>
              <td className="p-0"><span className="flex justify-center pr-1"><Ic w={22} h={22} vb="0 0 24 24"><circle cx="12" cy="12" r="6.500" fill="#fde7b5" /><path d="M12 0v3M12 21v3M0 12h3M21 12h3M3.500 3.500l2 2M18.500 18.500l2 2M3.500 20.500l2-2M18.500 5.500l2-2" stroke="#e6d9bd" strokeWidth="2" /></Ic></span></td>
              <td className="p-0"><Ic w={24} h={22}><path d="M2 10h14v10H2z" fill="#f6dcae" stroke="#6b5324" strokeWidth=".8" /><path d="M14 10V6a3.500 3.500 0 0 1 7 0" stroke="#f6dcae" strokeWidth="1.800" /><path d="M9 13v4" stroke="#6b5324" strokeWidth="1.500" /></Ic></td>
              <td className="p-0"><Ic w={20} h={20}><path d="M6 3h8M3 8h14M6 13h8" stroke="#eaf2fa" strokeWidth="3" /><path d="M3 10h14" stroke="#777" /></Ic></td>
              <td className="p-0"><span className="flex items-center gap-1.5 pl-0.5"><span className={`h-4.5 w-4.5 border border-black ${r.swatch}`} />{r.color}</span></td>
              <td className="p-0 pl-1 font-normal whitespace-nowrap">Continu...</td>
              <td className="p-0"><span className="flex items-center gap-2 pl-px"><span className="h-0.5 w-8 bg-white" />默认</span></td>
              <td className="p-0 pl-1">0</td>
              <td className="p-0"><Ic w={22} h={22}><path d="M4 3h9v10H4z" fill="#567" stroke="#dde4ee" strokeWidth="2" /><circle cx="15" cy="15" r="4.500" fill="#ffc52e" /><path d="M15 8v14M8 15h14M10 10l10 10M20 10L10 20" stroke="#f8a820" /></Ic></td>
              <td className="p-0" />
            </tr>
          ))}
        </tbody>
      </table>
      <div className="w-[139px] flex-1 border-r-2 border-[#4d4d4d]" />
      <ScrollBar className="mt-1 h-6.5" thumb="w-[68%]" />
    </div>
  );
}

function Palette() {
  return (
    <section aria-label="图层特性管理器" className="absolute top-32 right-[101px] z-10 flex h-[523px] w-[972px] rounded border-2 border-[#2f2f2f] bg-[#4f4f4f] py-0.5 pl-1 text-lg">
      <div className="flex flex-1 flex-col rounded-md border-2 border-[#3a3a3a] bg-[#5b5b5b] pt-2 pr-1.5 pl-0.5">
        <div className="flex h-8 items-center justify-between pl-1.5">
          <span className="pt-2">当前图层: 图层2</span>
          <label className="mb-1 flex h-6 w-47 items-center bg-[#656565]">
            <input aria-label="搜索图层" placeholder="搜索图层" className="h-6 min-w-0 flex-1 bg-transparent outline-none placeholder:text-[#b2b2b2]" />
            <Ic w={20} h={18}><path d="M10 9l7 7" stroke="#eee" strokeWidth="4" /><circle cx="7" cy="7" r="6" fill="#e4e4e4" stroke="#444" /></Ic>
          </label>
        </div>
        <div className="flex h-9 items-center pt-0.5 pl-0.5">
          <div className="flex w-[180px] items-center">
            <button aria-label="新建特性过滤器"><Folder funnel /></button>
            <button aria-label="新建组过滤器" className="ml-3"><Folder /></button>
            <span className="ml-2 h-6 w-px bg-[#333]" />
            <button aria-label="图层状态管理器" className="ml-2"><SmStack><path d="M12 6h10v14H12z" fill="#eef2f8" stroke="#3c587e" /><path d="M14 9h6v3h-6z" fill="#4a7ab5" /><path d="M15 16h4" stroke="#3c587e" strokeWidth="2" /></SmStack></button>
          </div>
          <div className="flex items-center gap-[7px]">
            <button aria-label="新建图层"><SmStack><circle cx="18" cy="11" r="4" fill="#ff9a3a" /><path d="M18 5v12M12 11h12" stroke="#ffc27a" /></SmStack></button>
            <button aria-label="新建冻结图层"><SmStack><path d="M18 5v12M13 8l10 6M23 8l-10 6" stroke="#8cb8d8" strokeWidth="2.500" /></SmStack></button>
            <button aria-label="删除图层"><SmStack><path d="M14 7l9 9M23 7l-9 9" stroke="#ee3322" strokeWidth="3" /></SmStack></button>
            <button aria-label="置为当前"><SmStack><path d="M11 9l4 4 8-11" stroke="#35a31a" strokeWidth="3" /></SmStack></button>
          </div>
          <div className="ml-auto flex items-center gap-2 pr-6">
            <button aria-label="刷新"><Ic w={20} h={20}><path d="M3 9a7 7 0 0 1 12-4M17 11a7 7 0 0 1-12 4" stroke="#c9c9c9" strokeWidth="2.500" /><path d="M18 1v7h-7zM2 19v-7h7z" fill="#c9c9c9" /></Ic></button>
            <button aria-label="切换替代亮显"><Ic w={24} h={20}><path d="M3 1h10v11H3zM14 9h9l-7 10H1l4-6" stroke="#c9c9c9" strokeWidth="1.800" /></Ic></button>
            <button aria-label="设置"><Gear /></button>
          </div>
        </div>
        <div className="flex flex-1 gap-1.5">
          <div className="flex w-[173px] flex-col border-2 border-[#666]">
            <div className="flex h-8.5 items-center justify-between border-b-2 border-[#666] pr-2 pb-0.5 pl-1">过滤器<Chevrons /></div>
            <div className="flex flex-1 flex-col overflow-hidden pt-1.5">
              <div className="flex h-6.5 items-center pl-2">
                <button aria-label="折叠" className="flex h-3.5 w-3.5 items-center justify-center bg-white"><span className="h-0.5 w-2 bg-[#48a]" /></button>
                <span className="w-2.5 border-t border-dotted border-black" />
                <Ic w={22} h={22}><path d="M7 2h9M5 6h9M7 10h5" stroke="#d5d5d5" strokeWidth="2.500" /><path d="M8 15l4 4 8-9" stroke="#35a31a" strokeWidth="3" /></Ic>
                <span className="ml-1 bg-[#f4f4f4] px-0.5 leading-6.5 text-black">全部</span>
              </div>
              <div className="flex h-6.5 items-center pl-11 whitespace-nowrap">
                <span className="-mt-3 h-3.5 w-4 shrink-0 border-b border-l border-dotted border-black" />
                <span className="mr-2"><Folder funnel /></span>
                所有使用的图层
              </div>
            </div>
            <ScrollBar className="h-6.5" thumb="w-3/4" />
            <div className="mt-0.5 flex h-7.5 items-center justify-between border-t-2 border-[#666] pr-2 pb-0.5 pl-1">
              <label className="flex items-center gap-1.5">
                <input type="checkbox" className="h-5 w-5 appearance-none border-2 border-[#333] bg-white" />
                反转过滤器(
              </label>
              <Chevrons />
            </div>
          </div>
          <LayerTable />
        </div>
        <div className="flex h-14 items-center pt-4 pl-1">全部: 显示了 3 个图层，共 3 个图层</div>
      </div>
      <div className="flex w-8 flex-col items-center gap-3 pt-1 pr-0.5 pb-1">
        <button aria-label="关闭"><Ic w={16} h={16}><path d="M2 2l12 12M14 2L2 14" stroke="#fff" strokeWidth="4" /></Ic></button>
        <button aria-label="自动隐藏"><Ic w={16} h={16}><path d="M3 1v14" stroke="#fff" strokeWidth="2" /><path d="M6 8l4-4v8zM14 3v10" fill="#fff" stroke="#fff" strokeWidth="1.500" /></Ic></button>
        <button aria-label="特性"><Gear s={16} c="#fff" /></button>
        <span className="mt-auto rotate-180 [text-orientation:sideways] [writing-mode:vertical-rl]">图层特性管理器</span>
        <Ic w={24} h={22}><path d="M9 1h12l-6 8H2zM2 14h13l6-8M2 19h13l6-8" stroke="#bbb" strokeWidth="1.800" /></Ic>
      </div>
    </section>
  );
}

function ViewCube() {
  return (
    <div className="absolute top-2 right-8 h-36 w-31 text-lg text-[#b4b8c0]">
      <svg width="124" height="144" viewBox="0 0 124 144" fill="none" className="absolute inset-0" aria-hidden="true">
        <circle cx="63" cy="69" r="50" stroke="#42474f" strokeWidth="13" />
        <path d="M38 45h49v49H38z" fill="#a6a6a6" />
        <path d="M48 55h29v28H48z" fill="#9ba0a8" />
        <path d="M48 78h29M62 58v20M62 65h10" stroke="#41464e" strokeWidth="1.500" />
      </svg>
      <span className="absolute top-1 left-13.5 leading-6">北</span>
      <span className="absolute top-28 left-13.5 leading-6">南</span>
      <span className="absolute top-14.5 left-0 leading-6">西</span>
      <span className="absolute top-14.5 left-26.5 leading-6">东</span>
    </div>
  );
}

function NavBar() {
  const s = "#3c4148";
  return (
    <div className="absolute top-[221px] right-[17px] flex h-[310px] w-11.5 flex-col items-center justify-between rounded bg-[#5a616a]/85 py-6">
      <button aria-label="导航控制盘"><Ic w={34} h={34}><circle cx="17" cy="17" r="15" stroke={s} strokeWidth="1.500" /><circle cx="17" cy="17" r="7" stroke={s} strokeWidth="1.500" /><path d="M7 27l5-5M27 27l-5-5M17 2h15v15" stroke={s} strokeWidth="1.500" /></Ic></button>
      <Caret color={s} />
      <button aria-label="平移"><Ic w={34} h={36}><path d="M11 35c-2-8-8-11-9-17 3-1 5 3 8 5L7 8c2-3 4 0 6 10l0-14c2-3 4-1 4 0l1 13 3-13c2-2 4 0 3 2l-2 13 6-9c2-1 4 1 3 3-3 7-5 10-6 16l-2 6z" stroke={s} strokeWidth="1.500" /></Ic></button>
      <button aria-label="缩放"><Ic w={34} h={34}><path d="M3 2l22 20M24 2L2 22" stroke={s} strokeWidth="1.500" /><path d="M0 0h7L0 7zM26 0h-7l7 7zM0 24h7l-7-7z" fill={s} /><circle cx="24" cy="23" r="6.500" stroke={s} strokeWidth="1.500" /><path d="M28 28l6 6" stroke={s} strokeWidth="3" /></Ic></button>
      <Caret color={s} />
      <button aria-label="动态观察"><Ic w={34} h={34}><path d="M15 33V8h-4l6-7 6 7h-4v25z" stroke={s} strokeWidth="1.500" /><ellipse cx="17" cy="20" rx="15" ry="6" stroke={s} strokeWidth="2" /><path d="M12 21v9l-7-5z" fill={s} /></Ic></button>
      <Caret color={s} />
      <button aria-label="ShowMotion"><Ic w={34} h={36}><path d="M1 1h8v9H1zM13 1h8v9h-8zM25 1h8v9h-8zM1 14h22v20H1z" stroke={s} strokeWidth="1.500" /><path d="M8 19v11l9-5z" fill={s} /></Ic></button>
    </div>
  );
}

function CommandLine() {
  return (
    <div className="absolute bottom-0.5 left-[392px] flex h-9.5 w-[1136px] rounded-l bg-[#bdbec0]">
      <div className="flex w-20.5 shrink-0 items-center rounded-l border-2 border-[#50545c] bg-linear-to-b from-[#6a6a6a] to-[#424242] pl-2.5">
        <span className="h-7 border-l-2 border-dotted border-[#999]" />
        <button aria-label="关闭命令行" className="ml-2"><Ic w={14} h={14}><path d="M1 1l12 12M13 1L1 13" stroke="#d5d5d5" strokeWidth="3" /></Ic></button>
        <button aria-label="自定义" className="ml-4"><Ic w={20} h={20}><path d="M9 9l10 10" stroke="#ccc" strokeWidth="4" /><path d="M2 3l4 4 3-3-4-3c4-1 8 2 7 7-2 4-9 5-11 0z" fill="#ccc" /></Ic></button>
      </div>
      <button aria-label="最近使用的命令" className="flex items-center gap-1.5 pl-1.5">
        <Ic w={24} h={22}><rect x="1" y="1" width="22" height="20" rx="2" fill="#a7abb3" stroke="#7f858f" strokeWidth="1.500" /><path d="M5 6l5 5-5 5M12 17h7" stroke="#444a58" strokeWidth="2" /></Ic>
        <Caret color="#555" />
      </button>
      <input aria-label="键入命令" placeholder="键入命令" className="ml-2.5 min-w-0 flex-1 bg-transparent text-xl text-black italic outline-none placeholder:text-[#66686c]" />
      <span className="pt-3.5 pr-1"><Ic w={12} h={8}><path d="M0 8l6-7 6 7z" fill="#111" /></Ic></span>
    </div>
  );
}

const watermark = ["育", "设", "学", "堂", "出", "品"];

function Canvas() {
  return (
    <main className="relative min-h-[676px] flex-1 overflow-hidden bg-[#212733] text-white">
      <svg className="absolute inset-0 h-full w-full" aria-hidden="true">
        <defs>
          <pattern id="minor" width="14.100" height="14.100" patternUnits="userSpaceOnUse" x="58" y="39">
            <path d="M0 .5h14.100M.5 0v14.100" stroke="#252b37" />
          </pattern>
          <pattern id="major" width="70.500" height="70.500" patternUnits="userSpaceOnUse" x="58" y="39">
            <path d="M0 .5h70.500M.5 0v70.500" stroke="#2d3542" />
          </pattern>
        </defs>
        <rect width="100%" height="100%" fill="url(#minor)" />
        <rect width="100%" height="100%" fill="url(#major)" />
        <path d="M331.500 142.500h259v211h-259z" fill="none" stroke="#1212c4" strokeWidth="1.500" />
        <path d="M1109.500 14v43M1109.500 66v43M1066 61.500h39M1114 61.500h44M1105 57.500h9v9h-9z" fill="none" stroke="#e8e8e8" />
      </svg>
      <svg width="130" height="130" viewBox="0 0 130 130" className="absolute bottom-0 left-0" fill="none" stroke="#e8ecf2" strokeWidth="1.300" aria-hidden="true">
        <path d="M17.500 34v74.500H93M11.500 101.500h13v13h-13zM19 12l9 9 9-9M28 21v10M97 88l19 19M116 88l-19 19" />
      </svg>
      <div className="absolute top-0.5 left-0.5 text-lg leading-7">[−][俯视][二维线框]</div>
      <div className="absolute top-0 right-1 h-[604px] w-2.5 bg-[#b6d1f2]" />
      <div className="absolute top-0 right-0 h-full w-1 bg-[#4c4c4c]" />
      <ViewCube />
      <NavBar />
      <button className="absolute top-[161px] right-[59px] flex h-6.5 w-24 items-center justify-end gap-2 rounded-md bg-[#8d929d] pr-2 text-base text-[#555a64]">
        WCS
        <Ic w={12} h={8}><path d="M0 0h12L6 7z" fill="#aab0ba" stroke="#c9cdd5" /></Ic>
      </button>
      <CommandLine />
      <Palette />
      <div aria-hidden="true" className="pointer-events-none absolute top-[221px] left-[825px] z-20 flex -rotate-45 gap-5 text-4xl leading-9 text-white opacity-5">
        {watermark.map((c) => (
          <span key={c}>{c}</span>
        ))}
      </div>
      <svg width="20" height="32" viewBox="0 0 20 32" className="absolute top-[283px] left-[1194px] z-20" aria-hidden="true">
        <path d="M1 1v22l5-5 4 9 4-2-4-8h7z" fill="#fff" stroke="#333" />
      </svg>
    </main>
  );
}

function LayoutTab({ label, active, w }: { label: string; active?: boolean; w: string }) {
  return (
    <a href="#layout" className={`relative -mr-2 flex h-6.5 items-center justify-center pb-1 ${w} ${active ? "font-bold text-white" : "text-[#c2c2c2]"}`}>
      <svg className="absolute inset-0 h-full w-full" viewBox="0 0 90 26" preserveAspectRatio="none" aria-hidden="true">
        <path d="M0 0H90C80 0 82 26 72 26H18C8 26 10 0 0 0z" fill={active ? "#7f7f7f" : "#585858"} />
      </svg>
      <span className="relative">{label}</span>
    </a>
  );
}

function LayoutTabs() {
  return (
    <div className="flex h-7.5 items-start border-t-2 border-[#4f5359] bg-[#383838] pl-3 text-lg">
      <LayoutTab label="模型" active w="w-20" />
      <LayoutTab label="布局1" w="w-22" />
      <LayoutTab label="布局2" w="w-22" />
      <button aria-label="新建布局" className="ml-3">
        <Ic w={36} h={25}><path d="M12 0h22c0 14-4 24-12 24H2C2 12 4 2 12 0z" fill="#4c4c4c" stroke="#606060" /><path d="M18 6v12M12 12h12" stroke="#bcbcbc" strokeWidth="3" /></Ic>
      </button>
    </div>
  );
}

function Cell({ w, children, end }: { w: string; end?: boolean } & Kids) {
  return <div className={`flex ${w} shrink-0 items-center border-l-2 border-[#777] ${end ? "border-r-2" : ""}`}>{children}</div>;
}
function Tog({ name, on, children }: { name: string; on?: boolean } & Kids) {
  return (
    <button aria-label={name} aria-pressed={!!on} className={`ml-px flex h-8.5 w-8.5 shrink-0 items-center justify-center ${on ? "bg-[#608fc8]" : ""}`}>
      <Ic>{children}</Ic>
    </button>
  );
}
const Tri = () => (
  <button aria-label="选项" className="flex h-8.5 flex-1 items-center justify-center"><Caret size={11} /></button>
);
const W = "#f4f4f4";
const Star = () => <path d="M10 1c2 4 2 8 3 11l6 9-6-3-3 2-3-2-6 3 6-9c1-3 1-7 3-11z" fill={W} />;

function StatusBar() {
  return (
    <footer className="flex h-10 overflow-hidden bg-[#383838] text-white">
      <div className="flex-1" />
      <div className="flex border-t-2 border-[#777] bg-[#4c4c4c]">
        <Cell w="w-[276px]"><span className="flex-1 pr-2.5 text-right text-[17px] font-normal text-[#a9a9a9]">4234.1299, 2421.6418, 0.0000</span></Cell>
        <Cell w="w-[47px]"><button className="flex-1 text-lg font-bold">模型</button></Cell>
        <Cell w="w-[100px]">
          <Tog name="栅格" on><path d="M7 1v22M12 1v22M17 1v22M0 6h24M0 12h24M0 18h24" stroke={W} strokeWidth="1.500" /></Tog>
          <Tog name="捕捉"><path d="M3 3h3v3H3zM10 3h3v3h-3zM17 3h3v3h-3zM3 10h3v3H3zM10 10h3v3h-3zM17 10h3v3h-3zM3 17h3v3H3zM10 17h3v3h-3zM17 17h3v3h-3z" fill={G} /></Tog>
          <Tri />
        </Cell>
        <Cell w="w-[41px]"><Tog name="推断约束"><path d="M12 16V1h10v8H12" stroke={G} strokeWidth="1.500" /><path d="M0 14h12v10H0z" fill={G} /></Tog></Cell>
        <Cell w="w-[36px]"><Tog name="动态输入" on><path d="M6 2v12M0 8h12" stroke={W} strokeWidth="1.500" /><path d="M9 15h14v7H9z" fill={W} /><path d="M11 16v5" stroke="#608fc8" /></Tog></Cell>
        <Cell w="w-[154px]">
          <Tog name="正交"><path d="M1 0v23h23M1 15h7v8" stroke={G} strokeWidth="1.500" /></Tog>
          <Tog name="极轴追踪" on><circle cx="10" cy="13" r="9" stroke={W} strokeWidth="1.500" /><path d="M10 13h14M10 13L19 2" stroke={W} strokeWidth="1.500" /></Tog>
          <Tri />
          <Tog name="等轴测草图"><path d="M12 0v24" stroke={N} /><path d="M3 3l18 18" stroke={R} /><path d="M10 10h4v4h-4z" fill="#4c4c4c" stroke={W} /></Tog>
          <Tri />
        </Cell>
        <Cell w="w-[97px]">
          <Tog name="对象捕捉追踪"><path d="M19 3L1 22h23" stroke={G} strokeWidth="1.500" /><circle cx="10" cy="13" r="2.500" fill={W} /></Tog>
          <Tog name="对象捕捉" on><path d="M8 4h15v19H3V8" stroke={W} strokeWidth="1.500" /><path d="M1 1h6v6H1z" stroke={W} strokeWidth="1.500" /></Tog>
          <Tri />
        </Cell>
        <Cell w="w-[38px]"><Tog name="线宽"><path d="M0 4h12M0 12h12M0 20h12" stroke={G} strokeWidth="4" /><path d="M12 3h12M12 10h12M12 18h12" stroke={G} strokeWidth="1.500" /></Tog></Cell>
        <Cell w="w-[38px]"><Tog name="透明度" on><path d="M1 1h22v22H1z" stroke={W} /><path d="M3 3h4v4H3zM12 3h4v4h-4zM7 7h5v4H7zM16 7h5v4h-5zM3 11h4v4H3zM12 11h4v4h-4zM7 15h5v4H7zM16 15h5v4h-5zM3 19h4v3H3zM12 19h4v3h-4z" fill={W} /></Tog></Cell>
        <Cell w="w-[38px]"><Tog name="选择循环"><path d="M3 0v8M0 4h7M5 18V7h13" stroke={G} strokeWidth="1.300" /><path d="M9 10h14v14H9z" fill={N} /></Tog></Cell>
        <Cell w="w-[62px]">
          <Tog name="三维对象捕捉"><path d="M4 14V6l5-5h14v15l-5 6H9M4 6h14l5-5M18 6v16" stroke={G} strokeWidth="1.300" /><path d="M1 17h6v6H1z" stroke="#f0a088" strokeWidth="1.500" /></Tog>
          <Tri />
        </Cell>
        <Cell w="w-[159px]">
          <Tog name="动态 UCS" on><path d="M4 3v18h17" stroke={W} strokeWidth="1.800" /><path d="M0 5h8L4 0zM19 17v7l5-3.500z" fill={W} /><path d="M14 4l-5 7h4l-2 7 6-9h-4z" fill={W} /></Tog>
          <Tog name="选择过滤"><path d="M4 4h16v17H4zM6 1h17v16" stroke={G} strokeWidth="1.300" /><path d="M1 2h5v5H1zM17 2h5v5h-5zM1 18h5v5H1zM17 18h5v5h-5z" fill={B} /></Tog>
          <Tri />
          <Tog name="小控件" on><path d="M12 3L3 9v10l9 4 9-4V9zM12 12l-9 7M12 12l9 7M12 12V3" stroke={W} strokeWidth="1.300" /><path d="M10 1h4v4h-4zM10 10h4v4h-4zM1 17h4v4H1zM19 17h4v4h-4z" fill="#608fc8" stroke={W} /></Tog>
          <Tri />
        </Cell>
        <Cell w="w-[219px]">
          <Tog name="注释可见性" on><Star /><circle cx="19" cy="5" r="3.500" stroke={W} /></Tog>
          <Tog name="自动缩放"><Star /><path d="M21 0l-5 6h3l-2 5 6-7h-3z" fill={W} /></Tog>
          <Tog name="注释比例"><Star /></Tog>
          <button className="flex flex-1 items-center justify-center gap-2 text-base font-semibold whitespace-nowrap">1:1 / 100%<Caret size={11} /></button>
        </Cell>
        <Cell w="w-[62px]">
          <Tog name="切换工作空间"><path d="M12 0v24M0 12h24M3.500 3.500l17 17M20.500 3.500l-17 17" stroke={G} strokeWidth="4" /><circle cx="12" cy="12" r="6" fill="#4c4c4c" stroke={G} strokeWidth="5" /></Tog>
          <Tri />
        </Cell>
        <Cell w="w-[40px]"><Tog name="注释监视器"><path d="M12 0v24M0 12h24" stroke={G} strokeWidth="3" /></Tog></Cell>
        <Cell w="w-[150px]">
          <span className="px-2.5"><Ic><path d="M3 0h13v4h-5v2h5v3h-5v2h5v3h-5v2h5v3h-5v2h5v3H3z" fill={G} /></Ic></span>
          <div className="relative flex flex-1 items-center">
            <select aria-label="单位" className="w-full appearance-none bg-transparent text-lg font-medium outline-none"><option>小数</option></select>
            <span className="pointer-events-none absolute right-1.5"><Caret size={11} /></span>
          </div>
        </Cell>
        <Cell w="w-[40px]"><Tog name="快捷特性"><path d="M3 1h18v22H3z" stroke={G} strokeWidth="1.500" /><path d="M3 1h18v4H3zM6 8h3v3H6zM6 13h3v3H6zM6 18h3v3H6z" fill={G} /><path d="M11 10h8M11 15h8M11 20h8" stroke={G} strokeWidth="1.500" /></Tog></Cell>
        <Cell w="w-[62px]">
          <Tog name="锁定用户界面"><path d="M9 18H1V1h19v8M1 4h19" stroke={G} strokeWidth="1.500" /><path d="M10 15h10v9H10z" fill={G} /><path d="M18 15v-2a3 3 0 0 1 6 0v3" stroke={G} strokeWidth="1.500" /></Tog>
          <Tri />
        </Cell>
        <Cell w="w-[41px]"><Tog name="隔离对象"><path d="M1 1h9v9H1zM5 23l5-9 5 9z" stroke={G} strokeWidth="1.300" /><circle cx="18" cy="11" r="5" stroke={G} strokeWidth="1.300" /></Tog></Cell>
        <Cell w="w-[43px]" end><Tog name="图形性能" on><circle cx="12" cy="12" r="11" fill="#9ec0e6" stroke={W} strokeWidth="1.500" /><path d="M10 16l8-9-5 11z" fill="#fff" /></Tog></Cell>
        <div className="w-1" />
        <Cell w="w-[75px]">
          <Tog name="全屏显示"><path d="M1 4h23v16H1z" stroke={G} strokeWidth="1.300" /><path d="M16 6h6v6l-2-2-3 2-1-1 2-3zM9 18H3v-6l2 2 3-2 1 1-2 3z" fill={G} /></Tog>
          <Tog name="自定义"><path d="M0 3h24M0 12h24M0 21h24" stroke={W} strokeWidth="3" /></Tog>
        </Cell>
      </div>
    </footer>
  );
}

export default function App() {
  return (
    <div className="flex min-h-screen bg-white p-2 font-light [font-family:'Noto_Sans','Noto_Sans_CJK_SC',sans-serif]">
      <div className="relative flex min-w-0 flex-1 flex-col bg-[#535353] text-white shadow-[0_0_8px_2px_#8d8a92]">
        <Header />
        <Tabs />
        <Ribbon />
        <FileTabs />
        <Canvas />
        <LayoutTabs />
        <StatusBar />
        <div className="absolute right-0 bottom-13.5 z-20 flex h-22 w-3.5 flex-col items-center justify-end rounded-l bg-[#343a4c] pb-2">
          <span className="h-19 w-1.5 bg-[repeating-linear-gradient(to_bottom,#343a4c_0_1px,transparent_1px_3px),linear-gradient(to_bottom,#3a4a66_0_45%,#c4b75a_50%,#3fae93_100%)]" />
        </div>
      </div>
    </div>
  );
}
